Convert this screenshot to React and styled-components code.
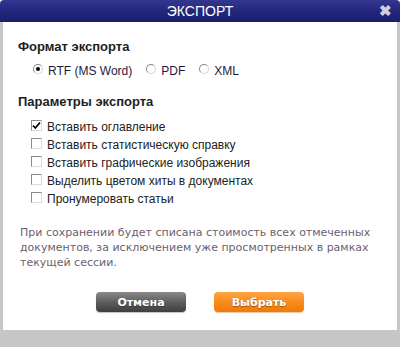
import React, { useState } from 'react';
import styled, { createGlobalStyle } from 'styled-components';

const GlobalStyle = createGlobalStyle`
  html, body {
    margin: 0;
    padding: 0;
    background: #ffffff;
  }
`;

const Dialog = styled.div`
  width: 400px;
  height: 347px;
  display: flex;
  flex-direction: column;
  font-family: "Liberation Sans", Arial, sans-serif;
  background: #ffffff;
`;

const TitleBar = styled.div`
  height: 22px;
  flex: none;
  position: relative;
  display: flex;
  align-items: center;
  justify-content: center;
  border-radius: 4px 4px 0 0;
  background: linear-gradient(to bottom, #33378f 0%, #24287e 45%, #1b1d6c 100%);
  color: #ffffff;
  font-size: 14px;
`;

const Close = styled.span`
  position: absolute;
  right: 8px;
  top: 3px;
  font-size: 15px;
  font-weight: bold;
  color: #d0d0de;
  line-height: 16px;
`;

const Body = styled.div`
  flex: 1;
  display: flex;
  flex-direction: column;
  border-left: 3px solid #c6c6c6;
  border-right: 3px solid #c6c6c6;
  padding: 17px 0 0 15px;
`;

const Heading = styled.div`
  font-weight: bold;
  font-size: 13px;
  color: #1e1e1e;
  line-height: 16px;
`;

const RadioRow = styled.div`
  display: flex;
  gap: 14px;
  padding: 8px 0 0 15px;
  margin-bottom: 15px;
`;

const Option = styled.label`
  display: flex;
  align-items: center;
  gap: 5px;
  font-size: 12px;
  color: #1e1a3e;
  line-height: 16px;
`;

const Radio = styled.span`
  width: 10px;
  height: 10px;
  border-radius: 50%;
  box-sizing: border-box;
  border: 1px solid #d4d4d4;
  border-top-color: #8a8a8a;
  border-left-color: #8a8a8a;
  background: #ffffff;
  display: flex;
  align-items: center;
  justify-content: center;
  margin-top: -5px;
  &::after {
    content: '';
    width: 4px;
    height: 4px;
    border-radius: 50%;
    background: ${(p) => (p.checked ? '#000000' : 'transparent')};
  }
`;

const CheckList = styled.div`
  display: flex;
  flex-direction: column;
  padding: 8px 0 0 13px;
`;

const CheckRow = styled.label`
  display: flex;
  align-items: center;
  gap: 5px;
  height: 18px;
  font-size: 12px;
  color: #222222;
`;

const Box = styled.span`
  width: 11px;
  height: 11px;
  box-sizing: border-box;
  border: 1px solid #dcdcdc;
  border-top-color: #8c8c8c;
  border-left-color: #8c8c8c;
  background: #ffffff;
  display: flex;
  align-items: center;
  justify-content: center;
  margin-top: -4px;
`;

const Note = styled.p`
  margin: 17px 15px 0 2px;
  font-family: "DejaVu Sans", Verdana, sans-serif;
  font-size: 11px;
  line-height: 15px;
  color: #6b5f6d;
`;

const Buttons = styled.div`
  display: flex;
  justify-content: center;
  gap: 28px;
  margin-top: 22px;
  margin-left: -15px;
`;

const Button = styled.button`
  width: 90px;
  height: 20px;
  border: none;
  border-radius: 4px;
  padding: 0;
  font-family: "DejaVu Sans", Verdana, sans-serif;
  font-weight: bold;
  font-size: 11px;
  color: #ffffff;
  text-shadow: 0 1px 1px rgba(0, 0, 0, 0.35);
  background: ${(p) =>
    p.primary
      ? 'linear-gradient(to bottom, #ffa544 0%, #f88d1c 50%, #ef7a0a 100%)'
      : 'linear-gradient(to bottom, #8a8a8a 0%, #5e5e5e 50%, #3e3e3e 100%)'};
  box-shadow: ${(p) =>
    p.primary ? '0 1px 1px rgba(200, 110, 20, 0.4)' : '0 1px 1px rgba(0, 0, 0, 0.25)'};
`;

const Footer = styled.div`
  height: 17px;
  flex: none;
  background: #c6c6c6;
`;

const Check = () => (
  <svg width="9" height="9" viewBox="0 0 9 9">
    <path d="M1 4.5 L3.3 7 L8 1.5" stroke="#000" strokeWidth="1.8" fill="none" />
  </svg>
);

const formats = ['RTF (MS Word)', 'PDF', 'XML'];

const params = [
  { label: 'Вставить оглавление', checked: true },
  { label: 'Вставить статистическую справку', checked: false },
  { label: 'Вставить графические изображения', checked: false },
  { label: 'Выделить цветом хиты в документах', checked: false },
  { label: 'Пронумеровать статьи', checked: false }
];

const App = () => {
  const [format] = useState('RTF (MS Word)');

  return (
    <>
      <GlobalStyle />
      <Dialog>
        <TitleBar>
          ЭКСПОРТ
          <Close>✖</Close>
        </TitleBar>
        <Body>
          <Heading>Формат экспорта</Heading>
          <RadioRow>
            {formats.map((f) => (
              <Option key={f}>
                <Radio checked={f === format} />
                {f}
              </Option>
            ))}
          </RadioRow>
          <Heading>Параметры экспорта</Heading>
          <CheckList>
            {params.map((p) => (
              <CheckRow key={p.label}>
                <Box>{p.checked && <Check />}</Box>
                {p.label}
              </CheckRow>
            ))}
          </CheckList>
          <Note>
            При сохранении будет списана стоимость всех отмеченных документов, за
            исключением уже просмотренных в рамках текущей сессии.
          </Note>
          <Buttons>
            <Button>Отмена</Button>
            <Button primary>Выбрать</Button>
          </Buttons>
        </Body>
        <Footer />
      </Dialog>
    </>
  );
};

export default App;
